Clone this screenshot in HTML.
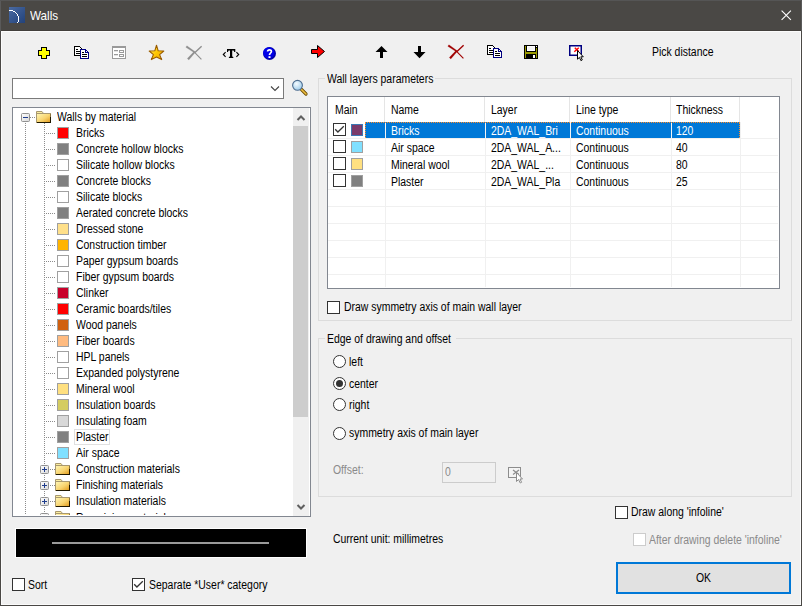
<!DOCTYPE html><html><head><meta charset="utf-8"><style>
*{margin:0;padding:0;box-sizing:border-box}
html,body{width:802px;height:606px;overflow:hidden;background:#f0f0f0}
body{position:relative;font-family:"Liberation Sans", sans-serif}
.t{position:absolute;white-space:nowrap;transform-origin:0 0}
svg{position:absolute;left:0;top:0;overflow:visible}
</style></head><body>
<div style="position:absolute;left:0px;top:0px;width:802px;height:606px;background:#4a4845"></div><div style="position:absolute;left:0px;top:0px;width:1px;height:31px;background:#5a5a5a"></div><div style="position:absolute;left:801px;top:0px;width:1px;height:31px;background:#5a5a5a"></div><div style="position:absolute;left:0px;top:0px;width:802px;height:1px;background:#555"></div><div style="position:absolute;left:1px;top:30px;width:800px;height:1px;background:#423f3c"></div><div style="position:absolute;left:1px;top:31px;width:800px;height:574px;background:#fbfbfb"></div><div style="position:absolute;left:2px;top:32px;width:798px;height:572px;background:#f0f0f0"></div><svg width="802" height="606"><defs><linearGradient id="ti" x1="0" y1="0" x2="1" y2="1"><stop offset="0" stop-color="#4a6aa2"/><stop offset="1" stop-color="#22427a"/></linearGradient><linearGradient id="fold" x1="0" y1="0" x2="1" y2="1"><stop offset="0" stop-color="#fff8b8"/><stop offset="0.55" stop-color="#f8d470"/><stop offset="1" stop-color="#e09818"/></linearGradient><linearGradient id="star" x1="0" y1="0" x2="1" y2="1"><stop offset="0" stop-color="#fff080"/><stop offset="0.5" stop-color="#ffc800"/><stop offset="1" stop-color="#f0a000"/></linearGradient><radialGradient id="lens" cx="0.4" cy="0.35" r="0.7"><stop offset="0" stop-color="#f4fbff"/><stop offset="1" stop-color="#9ccbea"/></radialGradient><linearGradient id="ebox" x1="0" y1="0" x2="1" y2="1"><stop offset="0" stop-color="#ffffff"/><stop offset="1" stop-color="#d8d8d8"/></linearGradient></defs><rect x="9" y="7" width="16" height="16" fill="url(#ti)"/><g fill="#fff" shape-rendering="crispEdges"><rect x="9" y="10" width="4" height="1"/><rect x="13" y="11" width="2" height="1"/><rect x="15" y="12" width="1" height="1"/><rect x="16" y="13" width="1" height="1"/><rect x="17" y="14" width="1" height="2"/><rect x="18" y="16" width="1" height="6"/><rect x="17" y="22" width="1" height="1"/></g><path d="M781.6 10.6 L790.9 19.9 M790.9 10.6 L781.6 19.9" stroke="#fff" stroke-width="1.1"/><g shape-rendering="crispEdges"><rect x="41" y="47" width="6" height="12" fill="#000"/><rect x="38" y="50" width="12" height="6" fill="#000"/><rect x="42" y="48" width="4" height="10" fill="#ff0"/><rect x="39" y="51" width="10" height="4" fill="#ff0"/></g><g transform="translate(74,46)" shape-rendering="crispEdges"><path d="M0.5 0.5 H5.5 L7.5 2.5 V9.5 H0.5 Z" fill="#fff" stroke="#000"/><rect x="2" y="3" width="2" height="1" fill="#000"/><rect x="2" y="5" width="4" height="1" fill="#000"/><rect x="2" y="7" width="4" height="1" fill="#000"/><path d="M6.5 3.5 H11.5 L14.5 6.5 V12.5 H6.5 Z" fill="#fff" stroke="#000080"/><path d="M11.5 3.5 V6.5 H14.5" fill="none" stroke="#000080"/><rect x="8" y="6" width="2" height="1" fill="#000"/><rect x="8" y="8" width="5" height="1" fill="#000"/><rect x="8" y="10" width="5" height="1" fill="#000"/></g><g shape-rendering="crispEdges" fill="none" stroke="#9a9a9a"><rect x="112.5" y="46.5" width="13" height="12" fill="#fff"/><rect x="113" y="47" width="12" height="1" fill="#9a9a9a" stroke="none"/><path d="M114 50.5 H118 M114 54.5 H118"/><path d="M114 51.5 H118 M114 55.5 H118" stroke="#e4e4e4"/><rect x="119.5" y="50.5" width="4" height="2"/><rect x="119.5" y="54.5" width="4" height="2"/></g><path d="M156.5 45.2 L158.2 50.8 L163.8 51 L159.6 54.6 L161.7 59.6 L156.5 57 L151.3 59.6 L153.4 54.6 L149.2 51 L154.8 50.8 Z" fill="url(#star)" stroke="#9a5c00" stroke-width="1.1" stroke-linejoin="round"/><g transform="translate(-262,1)" fill="#8e8e8e" stroke="#8e8e8e"><path d="M447.8 46.3 L448.9 44.8 L457.5 50.9 L456.7 52.1 Z" stroke-width="0.2"/><path d="M457.2 51.6 L456.0 50.6 L449.3 57.6 L450.8 59.0 Z" stroke-width="0.2"/><path d="M456.6 51.4 L463.4 58.4" fill="none" stroke-width="1.1"/><path d="M463.6 45.3 L457 51.5" fill="none" stroke-width="1.4"/></g><path d="M227 49 H235.3 V52 H234.3 L233.6 50.6 H232.2 V56.6 L233.3 57 V58 H228.9 V57 L230 56.6 V50.6 H228.6 L227.9 52 H227 Z" fill="#000"/><path d="M225.6 52.2 L223.3 54.5 L225.6 56.8 M236.4 52.2 L238.7 54.5 L236.4 56.8" fill="none" stroke="#000" stroke-width="1.1"/><circle cx="269.5" cy="53.5" r="6.5" fill="#0000a8"/><circle cx="268.8" cy="52.8" r="5.6" fill="#0000e8"/><path d="M267.6 51.6 C267.6 49.3 271.4 49.3 271.4 51.5 C271.4 52.9 269.5 53.2 269.5 55" fill="none" stroke="#fff" stroke-width="1.7"/><rect x="268.5" y="56.2" width="2" height="1.8" fill="#fff"/><path d="M311.5 49.5 H317.5 V45.5 L324.5 51.5 L317.5 57.5 V53.5 H311.5 Z" fill="#f00" stroke="#000" stroke-width="1" stroke-linejoin="miter"/><path d="M381.5 46 L387.5 52 H383 V58 H380 V52 H375.5 Z" fill="#000"/><path d="M418 46 H421 V52 H425.5 L419.5 58.2 L413.5 52 H418 Z" fill="#000"/><g transform="translate(0,0)" fill="#a00000" stroke="#a00000"><path d="M447.8 46.3 L448.9 44.8 L457.5 50.9 L456.7 52.1 Z" stroke-width="0.2"/><path d="M457.2 51.6 L456.0 50.6 L449.3 57.6 L450.8 59.0 Z" stroke-width="0.2"/><path d="M456.6 51.4 L463.4 58.4" fill="none" stroke-width="1.1"/><path d="M463.6 45.3 L457 51.5" fill="none" stroke-width="1.4"/></g><g transform="translate(487,45)" shape-rendering="crispEdges"><path d="M0.5 0.5 H5.5 L7.5 2.5 V9.5 H0.5 Z" fill="#fff" stroke="#000"/><rect x="2" y="3" width="2" height="1" fill="#000"/><rect x="2" y="5" width="4" height="1" fill="#000"/><rect x="2" y="7" width="4" height="1" fill="#000"/><path d="M6.5 3.5 H11.5 L14.5 6.5 V12.5 H6.5 Z" fill="#fff" stroke="#000080"/><path d="M11.5 3.5 V6.5 H14.5" fill="none" stroke="#000080"/><rect x="8" y="6" width="2" height="1" fill="#000"/><rect x="8" y="8" width="5" height="1" fill="#000"/><rect x="8" y="10" width="5" height="1" fill="#000"/></g><g shape-rendering="crispEdges"><rect x="524" y="45" width="14" height="14" fill="#000"/><rect x="525" y="46" width="1" height="12" fill="#9a9a00"/><rect x="536" y="48" width="1" height="10" fill="#9a9a00"/><rect x="525" y="52" width="12" height="2" fill="#9a9a00"/><rect x="527" y="46" width="8" height="5" fill="#fff"/><rect x="528" y="47" width="6" height="3" fill="#f4f4f4"/><rect x="533" y="55" width="2" height="3" fill="#fff"/><rect x="536" y="46" width="1" height="1" fill="#fff"/></g><g transform="translate(569,45)"><rect x="0.75" y="0.75" width="11.5" height="9.5" fill="#fff" stroke="#000080" stroke-width="1.5"/><path d="M5.3 6.8 L9.8 2.8 M5.8 2.8 L9.8 6.4" stroke="#f00" stroke-width="1.4"/><path d="M8.5 5.5 V14.2 L10.4 12.4 L11.9 15.6 L13.3 14.9 L11.8 11.8 H14.3 Z" fill="#fff" stroke="#000" stroke-width="1" stroke-linejoin="round"/></g><rect x="12.5" y="78.5" width="271" height="20" fill="#fff" stroke="#7a7a7a"/><path d="M271 86.5 L275 90.5 L279 86.5" fill="none" stroke="#444" stroke-width="1.1"/><path d="M301.5 89.5 L306 94" stroke="#6a4a00" stroke-width="3.2" stroke-linecap="round"/><path d="M301.5 89.5 L306 94" stroke="#f0c040" stroke-width="1.6" stroke-linecap="round"/><circle cx="297.5" cy="85.3" r="4.9" fill="url(#lens)" stroke="#4f6e90" stroke-width="1.1"/><rect x="12.5" y="107.5" width="298" height="409" fill="#fff" stroke="#828790"/><rect x="293" y="108" width="16" height="408" fill="#f0f0f0"/><rect x="293" y="126" width="15" height="291" fill="#cdcdcd"/><path d="M297.5 120 L301 116.5 L304.5 120" fill="none" stroke="#606060" stroke-width="2"/><path d="M297.5 505 L301 508.5 L304.5 505" fill="none" stroke="#606060" stroke-width="2"/><path d="M25.5 123 V515" stroke="#8c8c8c" stroke-width="1" stroke-dasharray="1 1"/><path d="M44.5 123 V515" stroke="#8c8c8c" stroke-width="1" stroke-dasharray="1 1"/><rect x="21.5" y="113.5" width="8" height="8" fill="url(#ebox)" stroke="#919191" rx="1"/><path d="M23 117.5 H28" stroke="#1e3c8c"/><path d="M30 117.5 H36" stroke="#8c8c8c" stroke-width="1" stroke-dasharray="1 1"/><g transform="translate(36,111)"><path d="M0.5 2.5 V0.5 H6 L7.5 2.5" fill="#fbeea0" stroke="#a89870"/><rect x="0.5" y="2.5" width="14" height="9" fill="url(#fold)" stroke="#a89870"/><path d="M1 11.5 H15 M14.5 6 V12" stroke="#201800" stroke-width="1"/><path d="M14.5 3 V6" stroke="#8a7440"/></g></svg><div class="t" style="left:57px;top:109.84px;font-size:12px;line-height:14px;color:#000;transform:scaleX(0.87);">Walls by material</div><svg width="802" height="606"><path d="M46 133.5 H56" stroke="#8c8c8c" stroke-width="1" stroke-dasharray="1 1"/><rect x="57.5" y="127.5" width="11" height="11" fill="#ff0000" stroke="#a0a0a0"/></svg><div class="t" style="left:76px;top:125.84px;font-size:12px;line-height:14px;color:#000;transform:scaleX(0.87);">Bricks</div><svg width="802" height="606"><path d="M46 149.5 H56" stroke="#8c8c8c" stroke-width="1" stroke-dasharray="1 1"/><rect x="57.5" y="143.5" width="11" height="11" fill="#808080" stroke="#a0a0a0"/></svg><div class="t" style="left:76px;top:141.84px;font-size:12px;line-height:14px;color:#000;transform:scaleX(0.87);">Concrete hollow blocks</div><svg width="802" height="606"><path d="M46 165.5 H56" stroke="#8c8c8c" stroke-width="1" stroke-dasharray="1 1"/><rect x="57.5" y="159.5" width="11" height="11" fill="#ffffff" stroke="#a0a0a0"/></svg><div class="t" style="left:76px;top:157.84px;font-size:12px;line-height:14px;color:#000;transform:scaleX(0.87);">Silicate hollow blocks</div><svg width="802" height="606"><path d="M46 181.5 H56" stroke="#8c8c8c" stroke-width="1" stroke-dasharray="1 1"/><rect x="57.5" y="175.5" width="11" height="11" fill="#808080" stroke="#a0a0a0"/></svg><div class="t" style="left:76px;top:173.84px;font-size:12px;line-height:14px;color:#000;transform:scaleX(0.87);">Concrete blocks</div><svg width="802" height="606"><path d="M46 197.5 H56" stroke="#8c8c8c" stroke-width="1" stroke-dasharray="1 1"/><rect x="57.5" y="191.5" width="11" height="11" fill="#ffffff" stroke="#a0a0a0"/></svg><div class="t" style="left:76px;top:189.84px;font-size:12px;line-height:14px;color:#000;transform:scaleX(0.87);">Silicate blocks</div><svg width="802" height="606"><path d="M46 213.5 H56" stroke="#8c8c8c" stroke-width="1" stroke-dasharray="1 1"/><rect x="57.5" y="207.5" width="11" height="11" fill="#808080" stroke="#a0a0a0"/></svg><div class="t" style="left:76px;top:205.84px;font-size:12px;line-height:14px;color:#000;transform:scaleX(0.87);">Aerated concrete blocks</div><svg width="802" height="606"><path d="M46 229.5 H56" stroke="#8c8c8c" stroke-width="1" stroke-dasharray="1 1"/><rect x="57.5" y="223.5" width="11" height="11" fill="#ffe08a" stroke="#a0a0a0"/></svg><div class="t" style="left:76px;top:221.84px;font-size:12px;line-height:14px;color:#000;transform:scaleX(0.87);">Dressed stone</div><svg width="802" height="606"><path d="M46 245.5 H56" stroke="#8c8c8c" stroke-width="1" stroke-dasharray="1 1"/><rect x="57.5" y="239.5" width="11" height="11" fill="#ffb400" stroke="#a0a0a0"/></svg><div class="t" style="left:76px;top:237.84px;font-size:12px;line-height:14px;color:#000;transform:scaleX(0.87);">Construction timber</div><svg width="802" height="606"><path d="M46 261.5 H56" stroke="#8c8c8c" stroke-width="1" stroke-dasharray="1 1"/><rect x="57.5" y="255.5" width="11" height="11" fill="#ffffff" stroke="#a0a0a0"/></svg><div class="t" style="left:76px;top:253.84px;font-size:12px;line-height:14px;color:#000;transform:scaleX(0.87);">Paper gypsum boards</div><svg width="802" height="606"><path d="M46 277.5 H56" stroke="#8c8c8c" stroke-width="1" stroke-dasharray="1 1"/><rect x="57.5" y="271.5" width="11" height="11" fill="#ffffff" stroke="#a0a0a0"/></svg><div class="t" style="left:76px;top:269.84px;font-size:12px;line-height:14px;color:#000;transform:scaleX(0.87);">Fiber gypsum boards</div><svg width="802" height="606"><path d="M46 293.5 H56" stroke="#8c8c8c" stroke-width="1" stroke-dasharray="1 1"/><rect x="57.5" y="287.5" width="11" height="11" fill="#c8002a" stroke="#a0a0a0"/></svg><div class="t" style="left:76px;top:285.84px;font-size:12px;line-height:14px;color:#000;transform:scaleX(0.87);">Clinker</div><svg width="802" height="606"><path d="M46 309.5 H56" stroke="#8c8c8c" stroke-width="1" stroke-dasharray="1 1"/><rect x="57.5" y="303.5" width="11" height="11" fill="#ff0000" stroke="#a0a0a0"/></svg><div class="t" style="left:76px;top:301.84px;font-size:12px;line-height:14px;color:#000;transform:scaleX(0.87);">Ceramic boards/tiles</div><svg width="802" height="606"><path d="M46 325.5 H56" stroke="#8c8c8c" stroke-width="1" stroke-dasharray="1 1"/><rect x="57.5" y="319.5" width="11" height="11" fill="#d06010" stroke="#a0a0a0"/></svg><div class="t" style="left:76px;top:317.84px;font-size:12px;line-height:14px;color:#000;transform:scaleX(0.87);">Wood panels</div><svg width="802" height="606"><path d="M46 341.5 H56" stroke="#8c8c8c" stroke-width="1" stroke-dasharray="1 1"/><rect x="57.5" y="335.5" width="11" height="11" fill="#ffbb80" stroke="#a0a0a0"/></svg><div class="t" style="left:76px;top:333.84px;font-size:12px;line-height:14px;color:#000;transform:scaleX(0.87);">Fiber boards</div><svg width="802" height="606"><path d="M46 357.5 H56" stroke="#8c8c8c" stroke-width="1" stroke-dasharray="1 1"/><rect x="57.5" y="351.5" width="11" height="11" fill="#ffffff" stroke="#a0a0a0"/></svg><div class="t" style="left:76px;top:349.84px;font-size:12px;line-height:14px;color:#000;transform:scaleX(0.87);">HPL panels</div><svg width="802" height="606"><path d="M46 373.5 H56" stroke="#8c8c8c" stroke-width="1" stroke-dasharray="1 1"/><rect x="57.5" y="367.5" width="11" height="11" fill="#ffffff" stroke="#a0a0a0"/></svg><div class="t" style="left:76px;top:365.84px;font-size:12px;line-height:14px;color:#000;transform:scaleX(0.87);">Expanded polystyrene</div><svg width="802" height="606"><path d="M46 389.5 H56" stroke="#8c8c8c" stroke-width="1" stroke-dasharray="1 1"/><rect x="57.5" y="383.5" width="11" height="11" fill="#ffe080" stroke="#a0a0a0"/></svg><div class="t" style="left:76px;top:381.84px;font-size:12px;line-height:14px;color:#000;transform:scaleX(0.87);">Mineral wool</div><svg width="802" height="606"><path d="M46 405.5 H56" stroke="#8c8c8c" stroke-width="1" stroke-dasharray="1 1"/><rect x="57.5" y="399.5" width="11" height="11" fill="#d4cc60" stroke="#a0a0a0"/></svg><div class="t" style="left:76px;top:397.84px;font-size:12px;line-height:14px;color:#000;transform:scaleX(0.87);">Insulation boards</div><svg width="802" height="606"><path d="M46 421.5 H56" stroke="#8c8c8c" stroke-width="1" stroke-dasharray="1 1"/><rect x="57.5" y="415.5" width="11" height="11" fill="#d8d8d8" stroke="#a0a0a0"/></svg><div class="t" style="left:76px;top:413.84px;font-size:12px;line-height:14px;color:#000;transform:scaleX(0.87);">Insulating foam</div><svg width="802" height="606"><path d="M46 437.5 H56" stroke="#8c8c8c" stroke-width="1" stroke-dasharray="1 1"/><rect x="57.5" y="431.5" width="11" height="11" fill="#808080" stroke="#a0a0a0"/><rect x="74.5" y="429.5" width="35" height="15" fill="none" stroke="#e0e0e0"/></svg><div class="t" style="left:76px;top:429.84px;font-size:12px;line-height:14px;color:#000;transform:scaleX(0.87);">Plaster</div><svg width="802" height="606"><path d="M46 453.5 H56" stroke="#8c8c8c" stroke-width="1" stroke-dasharray="1 1"/><rect x="57.5" y="447.5" width="11" height="11" fill="#80e0ff" stroke="#a0a0a0"/></svg><div class="t" style="left:76px;top:445.84px;font-size:12px;line-height:14px;color:#000;transform:scaleX(0.87);">Air space</div><svg width="802" height="606"><rect x="40.5" y="465.5" width="8" height="8" fill="url(#ebox)" stroke="#919191" rx="1"/><path d="M42 469.5 H47" stroke="#1e3c8c"/><path d="M44.5 467 V472" stroke="#1e3c8c"/><path d="M50 469.5 H55" stroke="#8c8c8c" stroke-width="1" stroke-dasharray="1 1"/><g transform="translate(55,463)"><path d="M0.5 2.5 V0.5 H6 L7.5 2.5" fill="#fbeea0" stroke="#a89870"/><rect x="0.5" y="2.5" width="14" height="9" fill="url(#fold)" stroke="#a89870"/><path d="M1 11.5 H15 M14.5 6 V12" stroke="#201800" stroke-width="1"/><path d="M14.5 3 V6" stroke="#8a7440"/></g></svg><div class="t" style="left:76px;top:461.84px;font-size:12px;line-height:14px;color:#000;transform:scaleX(0.87);">Construction materials</div><svg width="802" height="606"><rect x="40.5" y="481.5" width="8" height="8" fill="url(#ebox)" stroke="#919191" rx="1"/><path d="M42 485.5 H47" stroke="#1e3c8c"/><path d="M44.5 483 V488" stroke="#1e3c8c"/><path d="M50 485.5 H55" stroke="#8c8c8c" stroke-width="1" stroke-dasharray="1 1"/><g transform="translate(55,479)"><path d="M0.5 2.5 V0.5 H6 L7.5 2.5" fill="#fbeea0" stroke="#a89870"/><rect x="0.5" y="2.5" width="14" height="9" fill="url(#fold)" stroke="#a89870"/><path d="M1 11.5 H15 M14.5 6 V12" stroke="#201800" stroke-width="1"/><path d="M14.5 3 V6" stroke="#8a7440"/></g></svg><div class="t" style="left:76px;top:477.84px;font-size:12px;line-height:14px;color:#000;transform:scaleX(0.87);">Finishing materials</div><svg width="802" height="606"><rect x="40.5" y="497.5" width="8" height="8" fill="url(#ebox)" stroke="#919191" rx="1"/><path d="M42 501.5 H47" stroke="#1e3c8c"/><path d="M44.5 499 V504" stroke="#1e3c8c"/><path d="M50 501.5 H55" stroke="#8c8c8c" stroke-width="1" stroke-dasharray="1 1"/><g transform="translate(55,495)"><path d="M0.5 2.5 V0.5 H6 L7.5 2.5" fill="#fbeea0" stroke="#a89870"/><rect x="0.5" y="2.5" width="14" height="9" fill="url(#fold)" stroke="#a89870"/><path d="M1 11.5 H15 M14.5 6 V12" stroke="#201800" stroke-width="1"/><path d="M14.5 3 V6" stroke="#8a7440"/></g></svg><div class="t" style="left:76px;top:493.84px;font-size:12px;line-height:14px;color:#000;transform:scaleX(0.87);">Insulation materials</div><svg width="802" height="606"><rect x="40.5" y="513.5" width="8" height="8" fill="url(#ebox)" stroke="#919191" rx="1"/><path d="M42 517.5 H47" stroke="#1e3c8c"/><path d="M44.5 515 V520" stroke="#1e3c8c"/><path d="M50 517.5 H55" stroke="#8c8c8c" stroke-width="1" stroke-dasharray="1 1"/><g transform="translate(55,511)"><path d="M0.5 2.5 V0.5 H6 L7.5 2.5" fill="#fbeea0" stroke="#a89870"/><rect x="0.5" y="2.5" width="14" height="9" fill="url(#fold)" stroke="#a89870"/><path d="M1 11.5 H15 M14.5 6 V12" stroke="#201800" stroke-width="1"/><path d="M14.5 3 V6" stroke="#8a7440"/></g></svg><div class="t" style="left:76px;top:510.84px;font-size:12px;line-height:14px;color:#000;transform:scaleX(0.87);">Remaining materials</div><svg width="802" height="606"><rect x="12" y="517" width="300" height="10" fill="#f0f0f0"/><rect x="13" y="515" width="280" height="1" fill="#fff"/><path d="M12.5 516.5 H310.5" stroke="#828790"/><rect x="15" y="528" width="292" height="30" fill="#fff"/><rect x="16" y="529" width="290" height="28" fill="#000"/><rect x="52" y="542" width="217" height="2" fill="#9a9a9a"/><rect x="12.5" y="578.5" width="12" height="12" fill="#fff" stroke="#333333"/></svg><div class="t" style="left:28px;top:577.84px;font-size:12px;line-height:14px;color:#000;transform:scaleX(0.87);">Sort</div><svg width="802" height="606"><rect x="132.5" y="578.5" width="12" height="12" fill="#fff" stroke="#333333"/><path d="M134.2 584.2 L136.9 587 L142.8 581.2" fill="none" stroke="#333" stroke-width="1.3"/></svg><div class="t" style="left:149px;top:577.84px;font-size:12px;line-height:14px;color:#000;transform:scaleX(0.87);">Separate *User* category</div><svg width="802" height="606"><rect x="318.5" y="78.5" width="473" height="242" fill="none" stroke="#dcdcdc"/><rect x="325" y="72" width="110" height="12" fill="#f0f0f0"/></svg><div class="t" style="left:327px;top:71.84px;font-size:12px;line-height:14px;color:#000;transform:scaleX(0.87);">Wall layers parameters</div><svg width="802" height="606"><rect x="327.5" y="96.5" width="452" height="192" fill="#fff" stroke="#828790"/><path d="M384.5 97 V122" stroke="#e5e5e5"/><path d="M385.5 122 V287" stroke="#f0f0f0"/><path d="M484.5 97 V122" stroke="#e5e5e5"/><path d="M485.5 122 V287" stroke="#f0f0f0"/><path d="M569.5 97 V122" stroke="#e5e5e5"/><path d="M570.5 122 V287" stroke="#f0f0f0"/><path d="M670.5 97 V122" stroke="#e5e5e5"/><path d="M671.5 122 V287" stroke="#f0f0f0"/><path d="M739.5 97 V122" stroke="#e5e5e5"/><path d="M740.5 122 V287" stroke="#f0f0f0"/><path d="M328 138.5 H778" stroke="#f0f0f0"/><path d="M328 155.5 H778" stroke="#f0f0f0"/><path d="M328 172.5 H778" stroke="#f0f0f0"/><path d="M328 189.5 H778" stroke="#f0f0f0"/><path d="M328 206.5 H778" stroke="#f0f0f0"/><path d="M328 223.5 H778" stroke="#f0f0f0"/><path d="M328 240.5 H778" stroke="#f0f0f0"/><path d="M328 257.5 H778" stroke="#f0f0f0"/><path d="M328 274.5 H778" stroke="#f0f0f0"/><rect x="365" y="122" width="375" height="16" fill="#0078d7"/><path d="M385.5 122 V138" stroke="#f4f4f4"/><path d="M485.5 122 V138" stroke="#f4f4f4"/><path d="M570.5 122 V138" stroke="#f4f4f4"/><path d="M671.5 122 V138" stroke="#f4f4f4"/><g stroke="#ff8c28" stroke-dasharray="1 1"><path d="M365 122.5 H740"/><path d="M365.5 123 V138"/><path d="M739.5 123 V138"/></g></svg><div class="t" style="left:335px;top:102.84px;font-size:12px;line-height:14px;color:#000;transform:scaleX(0.87);">Main</div><div class="t" style="left:391px;top:102.84px;font-size:12px;line-height:14px;color:#000;transform:scaleX(0.87);">Name</div><div class="t" style="left:491px;top:102.84px;font-size:12px;line-height:14px;color:#000;transform:scaleX(0.87);">Layer</div><div class="t" style="left:576px;top:102.84px;font-size:12px;line-height:14px;color:#000;transform:scaleX(0.87);">Line type</div><div class="t" style="left:676px;top:102.84px;font-size:12px;line-height:14px;color:#000;transform:scaleX(0.87);">Thickness</div><svg width="802" height="606"><rect x="333.5" y="123.5" width="12" height="12" fill="#fff" stroke="#333333"/><path d="M335.2 129.2 L337.9 132 L343.8 126.2" fill="none" stroke="#333" stroke-width="1.3"/><rect x="351.5" y="124.5" width="11" height="11" fill="#7a3a6a" stroke="#3c78b4"/></svg><div class="t" style="left:391px;top:123.84px;font-size:12px;line-height:14px;color:#fff;transform:scaleX(0.87);">Bricks</div><div class="t" style="left:491px;top:123.84px;font-size:12px;line-height:14px;color:#fff;transform:scaleX(0.87);">2DA_WAL_Bri</div><div class="t" style="left:576px;top:123.84px;font-size:12px;line-height:14px;color:#fff;transform:scaleX(0.87);">Continuous</div><div class="t" style="left:676px;top:123.84px;font-size:12px;line-height:14px;color:#fff;transform:scaleX(0.87);">120</div><svg width="802" height="606"><rect x="333.5" y="140.5" width="12" height="12" fill="#fff" stroke="#333333"/><rect x="351.5" y="141.5" width="11" height="11" fill="#80e0ff" stroke="#a0a0a0"/></svg><div class="t" style="left:391px;top:140.84px;font-size:12px;line-height:14px;color:#000;transform:scaleX(0.87);">Air space</div><div class="t" style="left:491px;top:140.84px;font-size:12px;line-height:14px;color:#000;transform:scaleX(0.87);">2DA_WAL_A...</div><div class="t" style="left:576px;top:140.84px;font-size:12px;line-height:14px;color:#000;transform:scaleX(0.87);">Continuous</div><div class="t" style="left:676px;top:140.84px;font-size:12px;line-height:14px;color:#000;transform:scaleX(0.87);">40</div><svg width="802" height="606"><rect x="333.5" y="157.5" width="12" height="12" fill="#fff" stroke="#333333"/><rect x="351.5" y="158.5" width="11" height="11" fill="#ffe080" stroke="#a0a0a0"/></svg><div class="t" style="left:391px;top:157.84px;font-size:12px;line-height:14px;color:#000;transform:scaleX(0.87);">Mineral wool</div><div class="t" style="left:491px;top:157.84px;font-size:12px;line-height:14px;color:#000;transform:scaleX(0.87);">2DA_WAL_...</div><div class="t" style="left:576px;top:157.84px;font-size:12px;line-height:14px;color:#000;transform:scaleX(0.87);">Continuous</div><div class="t" style="left:676px;top:157.84px;font-size:12px;line-height:14px;color:#000;transform:scaleX(0.87);">80</div><svg width="802" height="606"><rect x="333.5" y="174.5" width="12" height="12" fill="#fff" stroke="#333333"/><rect x="351.5" y="175.5" width="11" height="11" fill="#808080" stroke="#a0a0a0"/></svg><div class="t" style="left:391px;top:174.84px;font-size:12px;line-height:14px;color:#000;transform:scaleX(0.87);">Plaster</div><div class="t" style="left:491px;top:174.84px;font-size:12px;line-height:14px;color:#000;transform:scaleX(0.87);">2DA_WAL_Pla</div><div class="t" style="left:576px;top:174.84px;font-size:12px;line-height:14px;color:#000;transform:scaleX(0.87);">Continuous</div><div class="t" style="left:676px;top:174.84px;font-size:12px;line-height:14px;color:#000;transform:scaleX(0.87);">25</div><svg width="802" height="606"><rect x="327.5" y="301.5" width="12" height="12" fill="#fff" stroke="#333333"/></svg><div class="t" style="left:344px;top:299.84px;font-size:12px;line-height:14px;color:#000;transform:scaleX(0.87);">Draw symmetry axis of main wall layer</div><svg width="802" height="606"><rect x="318.5" y="338.5" width="473" height="158" fill="none" stroke="#dcdcdc"/><rect x="325" y="332" width="131" height="12" fill="#f0f0f0"/></svg><div class="t" style="left:327px;top:331.84px;font-size:12px;line-height:14px;color:#000;transform:scaleX(0.87);">Edge of drawing and offset</div><svg width="802" height="606"><circle cx="339.5" cy="361.5" r="6" fill="#fff" stroke="#333" stroke-width="1"/></svg><div class="t" style="left:349px;top:354.84px;font-size:12px;line-height:14px;color:#000;transform:scaleX(0.87);">left</div><svg width="802" height="606"><circle cx="339.5" cy="383.5" r="6" fill="#fff" stroke="#333" stroke-width="1"/><circle cx="339.5" cy="383.5" r="3.5" fill="#333"/></svg><div class="t" style="left:349px;top:376.84px;font-size:12px;line-height:14px;color:#000;transform:scaleX(0.87);">center</div><svg width="802" height="606"><circle cx="339.5" cy="404.5" r="6" fill="#fff" stroke="#333" stroke-width="1"/></svg><div class="t" style="left:349px;top:397.84px;font-size:12px;line-height:14px;color:#000;transform:scaleX(0.87);">right</div><svg width="802" height="606"><circle cx="339.5" cy="433.5" r="6" fill="#fff" stroke="#333" stroke-width="1"/></svg><div class="t" style="left:349px;top:425.84px;font-size:12px;line-height:14px;color:#000;transform:scaleX(0.87);">symmetry axis of main layer</div><div class="t" style="left:333px;top:462.84px;font-size:12px;line-height:14px;color:#8a8a8a;transform:scaleX(0.87);">Offset:</div><svg width="802" height="606"><rect x="442.5" y="462.5" width="53" height="20" fill="#f0f0f0" stroke="#cccccc"/></svg><div class="t" style="left:445px;top:464.84px;font-size:12px;line-height:14px;color:#8a8a8a;transform:scaleX(0.87);">0</div><svg width="802" height="606"><g transform="translate(508,467)"><rect x="0.5" y="0.5" width="12" height="10" fill="#f4f4f4" stroke="#8c8c8c"/><path d="M5 3 L11 7.5 M11 3 L5 7.5" stroke="#8c8c8c" stroke-width="1.2"/><path d="M8.5 5.5 V14.5 L10.5 12.5 L12.3 16 L13.6 15.3 L12 12 H14.5 Z" fill="#fff" stroke="#8c8c8c" stroke-width="1"/></g><rect x="615.5" y="506.5" width="12" height="12" fill="#fff" stroke="#333333"/></svg><div class="t" style="left:631px;top:504.84px;font-size:12px;line-height:14px;color:#000;transform:scaleX(0.87);">Draw along 'infoline'</div><svg width="802" height="606"><rect x="633.5" y="533.5" width="12" height="12" fill="#fff" stroke="#cccccc"/></svg><div class="t" style="left:649px;top:532.84px;font-size:12px;line-height:14px;color:#8a8a8a;transform:scaleX(0.87);">After drawing delete 'infoline'</div><div class="t" style="left:333px;top:531.84px;font-size:12px;line-height:14px;color:#000;transform:scaleX(0.87);">Current unit: millimetres</div><svg width="802" height="606"><rect x="617" y="563" width="173" height="30" fill="#e1e1e1" stroke="#0078d7" stroke-width="2"/></svg><div class="t" style="left:696px;top:570.84px;font-size:12px;line-height:14px;color:#000;transform:scaleX(0.87);">OK</div><div class="t" style="left:30px;top:7.50px;font-size:13px;line-height:16px;color:#fff;transform:scaleX(0.9);">Walls</div><div class="t" style="left:652px;top:44.84px;font-size:12px;line-height:14px;color:#000;transform:scaleX(0.87);">Pick distance</div></body></html>
